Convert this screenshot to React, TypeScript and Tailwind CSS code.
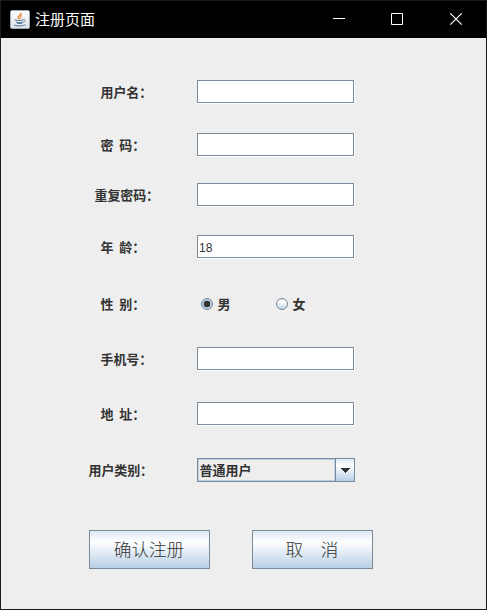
import { useState } from 'react';
import type { ReactNode } from 'react';

interface RowProps {
    label: string;
    className?: string;
    labelClassName?: string;
    children: ReactNode;
}

function Row({ label, className = '', labelClassName = 'pl-[99.5px]', children }: RowProps) {
    return (
        <div className={`flex h-6 ${className}`}>
            <span className={`w-[196px] shrink-0 whitespace-pre pt-px leading-6 tracking-[-0.1px] [word-spacing:-0.6px] ${labelClassName}`}>
                {label}：
            </span>
            {children}
        </div>
    );
}

function TextField({ defaultValue = '', type = 'text' }: { defaultValue?: string; type?: string }) {
    return (
        <div className="h-6 w-[158px] border-b border-r border-white">
            <input
                type={type}
                defaultValue={defaultValue}
                className="block h-[23px] w-[157px] border border-[#7a8a99] bg-white px-px pt-0.5 font-['Liberation_Sans'] text-[12px] font-normal text-[#333333] outline-none"
            />
        </div>
    );
}

interface RadioProps {
    id: string;
    label: string;
    checked: boolean;
    onSelect: () => void;
}

function Radio({ id, label, checked, onSelect }: RadioProps) {
    return (
        <button type="button" role="radio" aria-checked={checked} onClick={onSelect} className="flex w-[75px] items-center gap-[4.5px]">
            <svg width="12" height="12" viewBox="0 0 12 12">
                <defs>
                    <linearGradient id={id} x1="0" y1="0" x2="0" y2="1">
                        <stop offset="0" stopColor="#dde8f3" />
                        <stop offset="0.3" stopColor="#ffffff" />
                        <stop offset="1" stopColor="#b8cfe5" />
                    </linearGradient>
                </defs>
                <circle cx="6" cy="6" r="5.5" fill={checked ? '#b8cfe5' : `url(#${id})`} stroke="#7a8a99" />
                {checked && <circle cx="6" cy="6" r="3.2" fill="#333333" />}
            </svg>
            <span className="pt-px leading-6">{label}</span>
        </button>
    );
}

function MetalButton({ children }: { children: ReactNode }) {
    return (
        <button
            type="button"
            className="h-[39px] w-[121px] whitespace-pre border border-[#7a8a99] bg-linear-to-b from-[#dde8f3] via-white via-30% to-[#b8cfe5] pr-px pt-px text-[17.6px] font-light leading-[37px]"
        >
            {children}
        </button>
    );
}

// Java coffee cup shown in the title bar
function JavaIcon() {
    return (
        <svg width="20" height="20" viewBox="0 0 20 20" fill="none">
            <defs>
                <linearGradient id="cup-bg" x1="0" y1="0" x2="0" y2="1">
                    <stop offset="0" stopColor="#ffffff" />
                    <stop offset="1" stopColor="#dce2e7" />
                </linearGradient>
            </defs>
            <rect x="0.5" y="0.5" width="19" height="18" rx="1.5" fill="url(#cup-bg)" stroke="#9aaab7" />
            <path d="M11 3C11.8 5.2 7.6 5.8 8.3 7.6C8.6 8.4 9.6 8.6 9.5 9.2" stroke="#e58a35" strokeWidth="1.6" />
            <path d="M12 5.6C9.9 6.8 10.7 7.6 11 8.4" stroke="#eb9d58" strokeWidth="1.2" />
            <path d="M4.8 9.8C6.5 10.7 12 10.7 13.4 9.8M6 12C8 12.7 11.2 12.7 12.8 12M7 13.5H12" stroke="#5c7f9f" strokeWidth="1.2" />
            <path d="M13.4 9.6C16 9 15.8 11.8 13 12.4" stroke="#6e8ca7" />
            <path d="M4 15C6 16.2 13 16.2 15.5 14.8" stroke="#6e8ca7" strokeWidth="1.2" />
        </svg>
    );
}

export default function App() {
    const [gender, setGender] = useState('male');

    return (
        <div className="flex h-[610px] w-[487px] flex-col border border-[#1a1a1a] bg-[#eeeeee] font-['Liberation_Sans','Noto_Sans_CJK_SC',sans-serif] text-[13px] font-bold text-[#333333]">
            <header className="flex h-[37px] shrink-0 items-center bg-black pl-[9px] text-white">
                <JavaIcon />
                <h1 className="ml-[5px] flex-1 text-[15px] font-normal leading-9">注册页面</h1>
                <svg width="153" height="37" viewBox="0 0 153 37" fill="none" stroke="white">
                    <path d="M0 17.5H12M58.5 12.5H69.5V23.5H58.5Z" />
                    <path d="M117.3 12.3L128.7 23.7M128.7 12.3L117.3 23.7" strokeWidth="1.2" />
                </svg>
            </header>

            <form className="pt-[42px]">
                <Row label="用户名">
                    <TextField />
                </Row>
                <Row label="密  码" className="mt-[29px]">
                    <TextField type="password" />
                </Row>
                <Row label="重复密码" className="mt-[26px]" labelClassName="pl-[93.5px]">
                    <TextField type="password" />
                </Row>
                <Row label="年  龄" className="mt-7">
                    <TextField defaultValue="18" />
                </Row>
                <Row label="性  别" className="mt-[33px]">
                    <div className="flex pl-1" role="radiogroup">
                        <Radio id="male" label="男" checked={gender === 'male'} onSelect={() => setGender('male')} />
                        <Radio id="female" label="女" checked={gender === 'female'} onSelect={() => setGender('female')} />
                    </div>
                </Row>
                <Row label="手机号" className="mt-[31px]">
                    <TextField />
                </Row>
                <Row label="地  址" className="mt-[31px]">
                    <TextField />
                </Row>
                <Row label="用户类别" className="mt-8" labelClassName="pl-[87.5px]">
                    <button type="button" className="flex h-6 w-[158px] border border-[#7a8a99] text-left">
                        <span className="h-[22px] flex-1 border border-[#b8cfe5] pl-[0.5px] leading-[21px]">普通用户</span>
                        <span className="flex h-[22px] w-[19px] items-center justify-center border-l border-[#7a8a99] bg-linear-to-b from-[#dde8f3] via-white via-30% to-[#b8cfe5]">
                            <svg width="10" height="5" viewBox="0 0 10 5" shapeRendering="crispEdges">
                                <path d="M0 0H10L5 5Z" fill="#333333" />
                            </svg>
                        </span>
                    </button>
                </Row>

                <div className="mt-12 flex gap-[42px] pl-[88px]">
                    <MetalButton>确认注册</MetalButton>
                    <MetalButton>{'取\u3000消'}</MetalButton>
                </div>
            </form>
        </div>
    );
}
